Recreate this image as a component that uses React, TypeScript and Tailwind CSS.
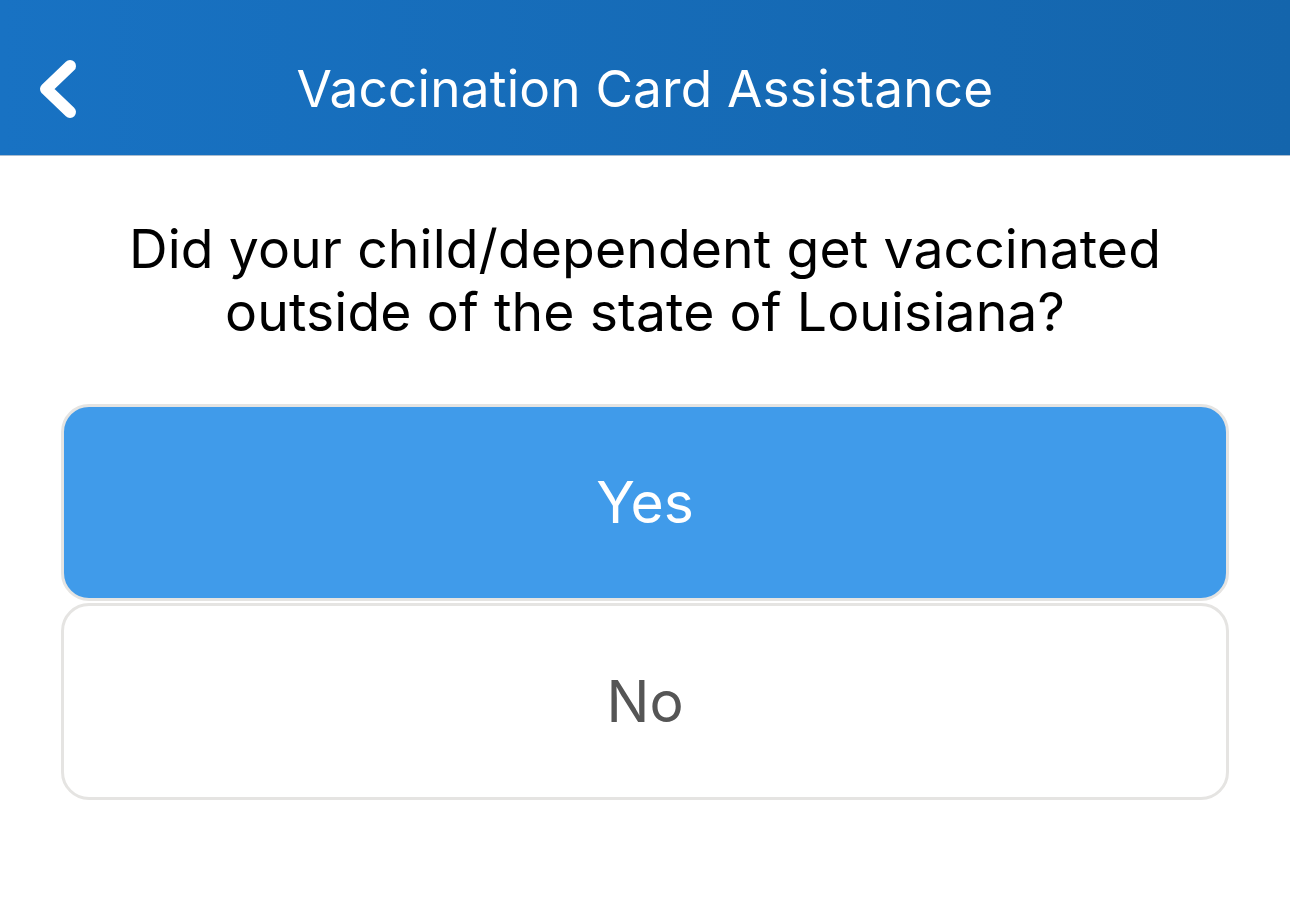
import React from "react";

export default function App() {
  const font = { fontFamily: "Inter, 'Liberation Sans', sans-serif" };
  return (
    <div className="w-[1290px] h-[898px] bg-white overflow-hidden" style={font}>
      <header className="relative h-[156px] bg-gradient-to-r from-[#1872c3] to-[#1465ac] border-b border-[#a9bccf] flex items-center justify-center">
        <svg className="absolute left-[28px] top-[52px]" width="60" height="76" viewBox="28 52 60 76">
          <path d="M70 66 L46 89 L70 112" fill="none" stroke="white" strokeWidth="12" strokeLinecap="round" strokeLinejoin="round" />
        </svg>
        <h1 className="text-white text-[51.3px] leading-none font-normal pt-[22px] tracking-[0.2px]">Vaccination Card Assistance</h1>
      </header>
      <p className="text-center text-black text-[53.5px] leading-[63px] pt-[61px] pb-[61px] tracking-[0.1px]">
        Did your child/dependent get vaccinated
        <br />
        outside of the state of Louisiana?
      </p>
      <div className="mx-[61px] flex flex-col gap-[2px]">
        <button className="h-[197px] rounded-[28px] border-[3px] border-[#e5e4e2] bg-[#409bea] text-white text-[57px] flex items-center justify-center">
          Yes
        </button>
        <button className="h-[197px] rounded-[28px] border-[3px] border-[#e5e4e2] bg-white text-[#555555] text-[57px] flex items-center justify-center">
          No
        </button>
      </div>
    </div>
  );
}
